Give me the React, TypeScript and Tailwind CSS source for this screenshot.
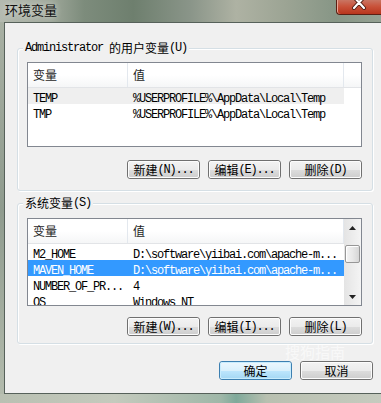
import React from "react";

const Mono = ({ children }: { children: React.ReactNode }) => (
  <span className="font-['Liberation_Mono',monospace] text-[12px] tracking-[-1.2px] whitespace-pre">{children}</span>
);
const Cjk = ({ children }: { children: React.ReactNode }) => (
  <span className="font-['Noto_Sans_CJK_SC',sans-serif] text-[12px]">{children}</span>
);

function Btn({ cjk, mono, def }: { cjk: string; mono?: string; def?: boolean }) {
  return (
    <div
      className={`w-[73px] h-[19px] rounded-[3px] border ${
        def ? "border-[#3c7fb1]" : "border-[#707070]"
      }`}
    >
      <div
        className={`h-full rounded-[2px] border flex items-center justify-center leading-none text-black ${
          def
            ? "border-[#c8ecfd] bg-[linear-gradient(to_bottom,#eaf6fd_0%,#d9f0fc_50%,#bee6fd_51%,#a7d9f5_100%)]"
            : "border-[#fcfcfc] bg-[linear-gradient(to_bottom,#f2f2f2_0%,#ebebeb_50%,#dddddd_51%,#cfcfcf_100%)]"
        }`}
      >
        <Cjk>{cjk}</Cjk>
        {mono && <Mono>{mono}</Mono>}
      </div>
    </div>
  );
}

type Row = { name: string; value: string; state?: "hover" | "sel" };

function Scrollbar() {
  return (
    <div className="w-[17px] shrink-0 flex flex-col bg-[linear-gradient(to_right,#e4e4e4,#f4f4f4)]">
      <div className="h-[17px] shrink-0 flex items-center justify-center">
        <svg width="7" height="4" viewBox="0 0 7 4">
          <polygon points="3.5,0 7,4 0,4" fill="#222" />
        </svg>
      </div>
      <div className="flex-1 flex flex-col">
        <div className="mt-[9px] mx-px h-[18px] rounded-[2px] border border-[#979797] bg-[linear-gradient(to_right,#f4f4f4,#e8e8e8_50%,#d6d6d6)] shadow-[inset_1px_1px_0_#ffffff]" />
      </div>
      <div className="h-[17px] shrink-0 flex items-center justify-center">
        <svg width="7" height="4" viewBox="0 0 7 4">
          <polygon points="0,0 7,0 3.5,4" fill="#222" />
        </svg>
      </div>
    </div>
  );
}

function List({ rows, scroll, h }: { rows: Row[]; scroll?: boolean; h: string }) {
  return (
    <div className={`border border-[#828790] bg-white flex overflow-hidden ${h}`}>
      <div className="flex-1 flex flex-col overflow-hidden">
        <div className="h-[25px] shrink-0 flex border-b border-[#e2e4e7] bg-[linear-gradient(to_bottom,#ffffff_0%,#ffffff_50%,#f5f6f7_100%)] text-[#1e1e1e]">
          <div className="w-[100px] border-r border-[#e3e8ee] pl-[5px] flex items-center">
            <Cjk>变量</Cjk>
          </div>
          <div className="w-[216px] border-r border-[#e3e8ee] pl-[5px] flex items-center">
            <Cjk>值</Cjk>
          </div>
        </div>
        {rows.map((r) => (
          <div
            key={r.name}
            className={`h-[16px] shrink-0 w-[316px] flex items-center ${
              r.state === "sel"
                ? "bg-[#3399ff] text-white"
                : r.state === "hover"
                ? "bg-[#efefef] text-black"
                : "text-black"
            }`}
          >
            <div className="w-[105px] pl-[5px]">
              <Mono>{r.name}</Mono>
            </div>
            <div className="flex-1">
              <Mono>{r.value}</Mono>
            </div>
          </div>
        ))}
      </div>
      {scroll && <Scrollbar />}
    </div>
  );
}

function Group({ label, mono, hot, children }: { label: string; mono: string; hot: string; children: React.ReactNode }) {
  return (
    <div className="relative rounded-[3px] border border-[#d5dfe5] shadow-[inset_1px_1px_0_#ffffff,1px_1px_0_#ffffff] pl-[9px] pr-[10px] flex flex-col">
      <div className="absolute -top-[8px] left-[5px] px-[2px] bg-[#f0f0f0] leading-[14px] h-[14px] flex items-center text-black">
        {mono && <Mono>{mono}</Mono>}
        <Cjk>{label}</Cjk>
        <Mono>{hot}</Mono>
      </div>
      {children}
    </div>
  );
}

export default function App() {
  const userRows: Row[] = [
    { name: "TEMP", value: "%USERPROFILE%\\AppData\\Local\\Temp", state: "hover" },
    { name: "TMP", value: "%USERPROFILE%\\AppData\\Local\\Temp" },
  ];
  const sysRows: Row[] = [
    { name: "M2_HOME", value: "D:\\software\\yiibai.com\\apache-m..." },
    { name: "MAVEN_HOME", value: "D:\\software\\yiibai.com\\apache-m...", state: "sel" },
    { name: "NUMBER_OF_PR...", value: "4" },
    { name: "OS", value: "Windows_NT" },
  ];
  return (
    <div className="w-[381px] h-[403px] flex flex-col overflow-hidden bg-[#9aa59a]">
      {/* title bar */}
      <div className="h-[22px] shrink-0 flex items-start justify-between bg-[linear-gradient(90deg,#b4bab0_0%,#a3ab9e_12%,#7d8c7c_22%,#6e7f6e_35%,#8a9589_50%,#aeb2a3_62%,#9ca494_75%,#879686_88%,#95a193_100%)]">
        <div className="pl-[5px] pt-[3px] leading-[14px] text-[#111] font-['Noto_Sans_CJK_SC',sans-serif] text-[13px] [text-shadow:0_0_6px_rgba(255,255,255,0.7)]">
          环境变量
        </div>
        <div className="w-[45px] h-[15px] rounded-bl-[4px] border border-t-0 border-r-0 border-[#5b1f14] bg-[linear-gradient(to_bottom,#c97563_0%,#c9533b_45%,#b8351d_100%)] shadow-[inset_1px_0_0_#e8a898] flex justify-center overflow-hidden">
          <svg width="16" height="14" viewBox="0 0 16 14">
            <path d="M3 -3 L13 8 M13 -3 L3 8" stroke="#4a1a10" strokeWidth="4" strokeLinecap="round" />
            <path d="M3 -3 L13 8 M13 -3 L3 8" stroke="#ffffff" strokeWidth="2.2" strokeLinecap="round" />
          </svg>
        </div>
      </div>
      <div className="flex-1 flex min-h-0">
        {/* left frame */}
        <div className="w-[4px] shrink-0 bg-[linear-gradient(to_bottom,#a8b0a3,#8f9b8e_50%,#b3bbad)]" />
        {/* body */}
        <div className="relative flex-1 bg-[#f0f0f0] border-t border-l border-b border-[#56615a] pl-[12px] pr-[8px] pt-[25px] flex flex-col">
          <Group label="的用户变量" mono="Administrator " hot="(U)">
            <div className="pt-[13px]" />
            <List rows={userRows} h="h-[85px]" />
            <div className="mt-[13px] flex justify-end gap-[8px]">
              <Btn cjk="新建" mono="(N)..." />
              <Btn cjk="编辑" mono="(E)..." />
              <Btn cjk="删除" mono="(D)" />
            </div>
            <div className="h-[11px]" />
          </Group>
          <div className="h-[12px] shrink-0" />
          <Group label="系统变量" mono="" hot="(S)">
            <div className="pt-[14px]" />
            <List rows={sysRows} scroll h="h-[88px]" />
            <div className="mt-[11px] flex justify-end gap-[8px]">
              <Btn cjk="新建" mono="(W)..." />
              <Btn cjk="编辑" mono="(I)..." />
              <Btn cjk="删除" mono="(L)" />
            </div>
            <div className="h-[7px]" />
          </Group>
          <div className="mt-[17px] flex justify-end gap-[8px]">
            <Btn cjk="确定" def />
            <Btn cjk="取消" />
          </div>
          <div className="absolute left-[280px] top-[321px] text-white/60 font-['Noto_Sans_CJK_SC',sans-serif] text-[15px] leading-none pointer-events-none">
            搜狗指南
          </div>
        </div>
      </div>
      {/* bottom frame */}
      <div className="h-[9px] shrink-0 bg-[linear-gradient(90deg,#b9c0b2_0%,#c4cabd_30%,#9fb7a8_58%,#7fa99a_62%,#b8c0b0_70%,#c6cbbf_100%)]" />
    </div>
  );
}
